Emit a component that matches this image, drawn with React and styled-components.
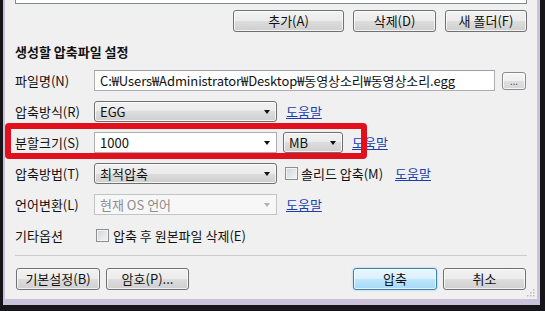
import React from "react";
import styled, { createGlobalStyle, css } from "styled-components";

const Global = createGlobalStyle`
  html, body { margin: 0; padding: 0; background: #16161a; }
  body {
    font-family: "Noto Sans CJK KR", "Noto Sans", sans-serif;
    font-size: 13px;
    color: #111;
  }
  * { box-sizing: border-box; }
`;

const Frame = styled.div`
  width: 545px;
  height: 311px;
  display: flex;
  flex-direction: column;
  border-left: 3px solid #16161a;
  border-right: 5px solid #16161a;
  border-bottom: 6px solid #16161a;
  padding: 0 3px 6px 2px;
  background: #cbc1d8;
`;

const Client = styled.div`
  flex: 1;
  position: relative;
  background: #f0f0f0;
  display: flex;
  flex-direction: column;
  padding: 0 10px;
`;

const ListStub = styled.div`
  height: 4px;
  background: #fff;
  border: 1px solid #828790;
  border-top: none;
`;

const ButtonRow = styled.div`
  display: flex;
  justify-content: flex-end;
  gap: 9px;
  margin-top: 6px;
`;

const Button = styled.button`
  height: 22px;
  width: ${(p) => p.$w}px;
  padding: 0;
  font: inherit;
  color: #111;
  line-height: 18px;
  border-radius: 3px;
  border: 1px solid #707070;
  box-shadow: inset 0 0 0 1px rgba(255, 255, 255, 0.75);
  background: linear-gradient(#f2f2f2 0%, #ebebeb 50%, #dddddd 50%, #cfcfcf 100%);
  ${(p) =>
    p.$default &&
    css`
      border-color: #3c7fb1;
      box-shadow: inset 0 0 0 1px rgba(255, 255, 255, 0.7), 0 0 2px #7fc4ee;
      background: linear-gradient(#eaf6fd 0%, #d9f0fc 50%, #bee6fd 50%, #a7d9f5 100%);
    `}
`;

const Title = styled.div`
  margin-top: 12px;
  line-height: 16px;
  font-weight: bold;
`;

const Form = styled.div`
  display: flex;
  flex-direction: column;
  gap: 10px;
  margin-top: 10px;
`;

const Row = styled.div`
  position: relative;
  display: flex;
  align-items: center;
  height: 21px;
`;

const Label = styled.span`
  width: 79px;
  flex-shrink: 0;
  line-height: 16px;
`;

const TextBox = styled.div`
  width: ${(p) => p.$w}px;
  height: 21px;
  display: flex;
  align-items: center;
  padding-left: 5px;
  background: #fff;
  border: 1px solid #abadb3;
  border-top-color: #9da0a8;
  white-space: nowrap;
  overflow: hidden;
  letter-spacing: -0.1px;
`;

const BrowseButton = styled.button`
  width: 24px;
  height: 18px;
  margin-left: 7px;
  padding: 0;
  font: 10px "Noto Sans", sans-serif;
  line-height: 12px;
  color: #555;
  border-radius: 3px;
  border: 1px solid #8a8a8a;
  box-shadow: inset 0 0 0 1px rgba(255, 255, 255, 0.75);
  background: linear-gradient(#f6f6f6 0%, #eeeeee 50%, #e0e0e0 50%, #d6d6d6 100%);
`;

const comboKinds = {
  button: css`
    border: 1px solid #707070;
    border-radius: 3px;
    box-shadow: inset 0 0 0 1px rgba(255, 255, 255, 0.75);
    background: linear-gradient(#f2f2f2 0%, #ebebeb 50%, #dddddd 50%, #cfcfcf 100%);
  `,
  edit: css`
    border: 1px solid #abadb3;
    background: #fff;
  `,
  disabled: css`
    border: 1px solid #c2c5c8;
    background: #f7f7f7;
    color: #8d8d8d;
  `,
};

const Combo = styled.div`
  width: ${(p) => p.$w}px;
  height: 21px;
  flex-shrink: 0;
  display: flex;
  align-items: center;
  margin-left: ${(p) => p.$ml ?? 0}px;
  padding: 0 6px 0 5px;
  line-height: 16px;
  ${(p) => comboKinds[p.$kind]}
`;

const ComboText = styled.span`
  flex: 1;
`;

const Arrow = styled.span`
  width: 0;
  height: 0;
  border-left: 3.5px solid transparent;
  border-right: 3.5px solid transparent;
  border-top: 4px solid ${(p) => (p.$dim ? "#b0b0b0" : "#111")};
`;

const Link = styled.a`
  margin-left: ${(p) => p.$ml ?? 9}px;
  color: #1a3eb0;
  text-decoration: underline;
  line-height: 16px;
  cursor: pointer;
`;

const Check = styled.span`
  width: 13px;
  height: 13px;
  flex-shrink: 0;
  margin-left: ${(p) => p.$ml}px;
  border: 1px solid #8e8f8f;
  background: linear-gradient(135deg, #d3d5d8 0%, #f4f4f4 100%);
  box-shadow: inset 0 0 0 1px #f4f4f4;
`;

const CheckText = styled.span`
  margin-left: ${(p) => p.$ml}px;
  line-height: 16px;
`;

const Highlight = styled.div`
  position: absolute;
  left: -10px;
  top: -9px;
  width: 362px;
  height: 36px;
  border: 6px solid #e2101d;
  border-radius: 4px;
  pointer-events: none;
`;

const Separator = styled.div`
  margin-top: 9px;
  height: 1px;
  background: #cdcdcd;
`;

const BottomBar = styled.div`
  margin-top: 12px;
  display: flex;
  justify-content: space-between;
  padding: 0 1px;
`;

const Group = styled.div`
  display: flex;
  gap: 6px;
`;

const Grip = styled.svg`
  position: absolute;
  right: 1px;
  bottom: 1px;
`;

function Dropdown({ w, kind, ml, children }) {
  return (
    <Combo $w={w} $kind={kind} $ml={ml}>
      <ComboText>{children}</ComboText>
      <Arrow $dim={kind === "disabled"} />
    </Combo>
  );
}

export default function App() {
  return (
    <>
      <Global />
      <Frame>
        <Client>
          <ListStub />
          <ButtonRow>
            <Button $w={111}>추가(A)</Button>
            <Button $w={83}>삭제(D)</Button>
            <Button $w={82}>새 폴더(F)</Button>
          </ButtonRow>
          <Title>생성할 압축파일 설정</Title>
          <Form>
            <Row>
              <Label>파일명(N)</Label>
              <TextBox $w={401}>C:₩Users₩Administrator₩Desktop₩동영상소리₩동영상소리.egg</TextBox>
              <BrowseButton>...</BrowseButton>
            </Row>
            <Row>
              <Label>압축방식(R)</Label>
              <Dropdown w={183} kind="button">EGG</Dropdown>
              <Link>도움말</Link>
            </Row>
            <Row>
              <Label>분할크기(S)</Label>
              <Dropdown w={183} kind="edit">1000</Dropdown>
              <Dropdown w={60} kind="button" ml={6}>MB</Dropdown>
              <Link>도움말</Link>
              <Highlight />
            </Row>
            <Row>
              <Label>압축방법(T)</Label>
              <Dropdown w={183} kind="button">최적압축</Dropdown>
              <Check $ml={8} />
              <CheckText $ml={3}>솔리드 압축(M)</CheckText>
              <Link $ml={12}>도움말</Link>
            </Row>
            <Row>
              <Label>언어변환(L)</Label>
              <Dropdown w={183} kind="disabled">현재 OS 언어</Dropdown>
              <Link>도움말</Link>
            </Row>
            <Row>
              <Label>기타옵션</Label>
              <Check $ml={2} />
              <CheckText $ml={4}>압축 후 원본파일 삭제(E)</CheckText>
            </Row>
          </Form>
          <Separator />
          <BottomBar>
            <Group>
              <Button $w={84}>기본설정(B)</Button>
              <Button $w={83}>암호(P)...</Button>
            </Group>
            <Group>
              <Button $w={84} $default>압축</Button>
              <Button $w={83}>취소</Button>
            </Group>
          </BottomBar>
          <Grip width="10" height="10" viewBox="0 0 10 10">
            {[
              [8, 2],
              [8, 5],
              [5, 5],
              [8, 8],
              [5, 8],
              [2, 8],
            ].map(([x, y]) => (
              <rect key={`${x}-${y}`} x={x - 1} y={y - 1} width="1.5" height="1.5" fill="#b9b9b9" />
            ))}
          </Grip>
        </Client>
      </Frame>
    </>
  );
}
